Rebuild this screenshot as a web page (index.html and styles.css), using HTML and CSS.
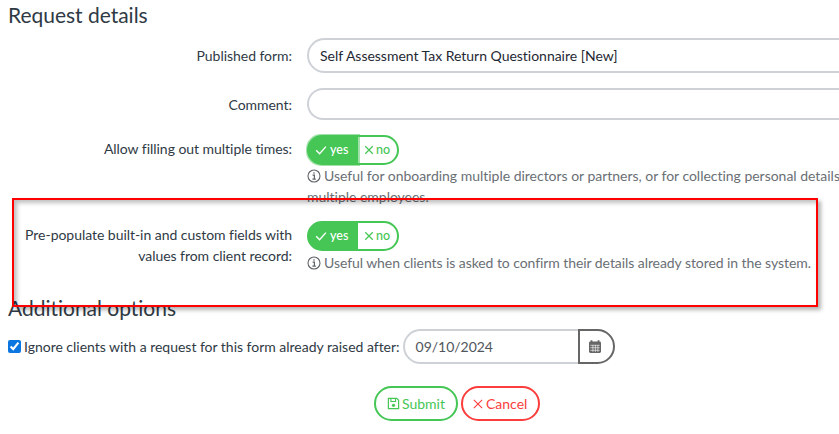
FILE: index.html
```html
<!DOCTYPE html>
<html lang="en">
<head>
<meta charset="utf-8">
<title>Request details</title>
<link rel="stylesheet" href="styles.css">
</head>
<body>
<div class="page">
  <h2 class="heading">Request details</h2>
  <div class="form">
    <div class="row row-form">
      <label class="label">Published form:</label>
      <div class="control"><div class="input input-form">Self Assessment Tax Return Questionnaire [New]</div></div>
    </div>
    <div class="row row-comment">
      <label class="label">Comment:</label>
      <div class="control"><div class="input input-comment"></div></div>
    </div>
    <div class="row row-multi">
      <label class="label label-toggle">Allow filling out multiple times:</label>
      <div class="control">
        <div class="toggle">
          <span class="yes yes-focus"><svg class="ico" viewBox="0 0 12 12"><path d="M1.2 6.3 4.6 9.7 10.9 2.6" fill="none" stroke="currentColor" stroke-width="1.4"/></svg>yes</span>
          <span class="no"><svg class="ico-x" viewBox="0 0 12 12"><path d="M1.5 1.5 10.5 10.5M10.5 1.5 1.5 10.5" fill="none" stroke="currentColor" stroke-width="1.5"/></svg>no</span>
        </div>
        <p class="help help-wrap"><svg class="info" viewBox="0 0 14 14"><circle cx="7" cy="7" r="6" fill="none" stroke="currentColor" stroke-width="1.1"/><path d="M7 3.2v1.6M5.6 6.2H7.4V10M5.4 10.2H8.8" fill="none" stroke="currentColor" stroke-width="1.2"/></svg>Useful for onboarding multiple directors or partners, or for collecting personal details from multiple employees.</p>
      </div>
    </div>
    <div class="row row-prefill">
      <label class="label label-prefill">Pre-populate built-in and custom fields with values from client record:</label>
      <div class="control">
        <div class="toggle">
          <span class="yes"><svg class="ico" viewBox="0 0 12 12"><path d="M1.2 6.3 4.6 9.7 10.9 2.6" fill="none" stroke="currentColor" stroke-width="1.4"/></svg>yes</span>
          <span class="no"><svg class="ico-x" viewBox="0 0 12 12"><path d="M1.5 1.5 10.5 10.5M10.5 1.5 1.5 10.5" fill="none" stroke="currentColor" stroke-width="1.5"/></svg>no</span>
        </div>
        <p class="help help-single"><svg class="info" viewBox="0 0 14 14"><circle cx="7" cy="7" r="6" fill="none" stroke="currentColor" stroke-width="1.1"/><path d="M7 3.2v1.6M5.6 6.2H7.4V10M5.4 10.2H8.8" fill="none" stroke="currentColor" stroke-width="1.2"/></svg>Useful when clients is asked to confirm their details already stored in the system.</p>
      </div>
    </div>
  </div>
  <h2 class="heading heading-options">Additional options</h2>
  <div class="options">
    <input class="check" type="checkbox" checked>
    <span class="check-label">Ignore clients with a request for this form already raised after:</span>
    <div class="date">
      <div class="date-input">09/10/2024</div>
      <div class="date-btn"><svg class="cal" viewBox="0 0 14 14"><path d="M3.5 .8v2M10.5 .8v2" stroke="#666" stroke-width="1.8"/><rect x="1" y="2" width="12" height="11.4" rx="1.4" fill="#666"/><path d="M2.3 5.8h9.4M2.3 8.2h9.4M2.3 10.8h9.4M4.9 5.4v7M7.4 5.4v7M9.9 5.4v7" stroke="#fff" stroke-width=".6"/></svg></div>
    </div>
  </div>
  <div class="actions">
    <button class="btn btn-submit" type="button"><svg class="save" viewBox="0 0 14 14"><path d="M1.5 1.5h9l2 2v9h-11z" fill="none" stroke="currentColor" stroke-width="1.3"/><path d="M4.2 1.8v3h5v-3" fill="none" stroke="currentColor" stroke-width="1.2"/><circle cx="7" cy="9" r="1.7" fill="currentColor"/></svg>Submit</button>
    <button class="btn btn-cancel" type="button"><svg class="cancel-x" viewBox="0 0 12 12"><path d="M1 1 11 11M11 1 1 11" fill="none" stroke="currentColor" stroke-width="1.3"/></svg>Cancel</button>
  </div>
  <div class="annotation"></div>
</div>
</body>
</html>
```
FILE: styles.css
```css
html, body { margin: 0; padding: 0; background: #fff; }
body { width: 839px; height: 434px; overflow: hidden; font-family: Lato, "Open Sans", sans-serif; font-size: 14px; color: #2f3a45; letter-spacing: -.02px; }
.page { position: relative; width: 839px; height: 434px; overflow: hidden; }
.heading { margin: 0; padding: 2px 0 0 8px; font-size: 21px; font-weight: 400; line-height: 25px; color: #2f3a45; }
.form { padding-top: 11px; }
.row { display: grid; grid-template-columns: 292px 1fr; column-gap: 15px; }
.label { text-align: right; line-height: 21px; color: #2f3a45; letter-spacing: -.04px; }
.row-form { height: 50px; }
.row-form .label { padding-top: 7px; }
.row-comment { height: 47px; }
.row-comment .label { padding-top: 6px; }
.row-multi { height: 86px; }
.label-toggle { padding-top: 3px; }
.row-prefill { height: 74px; }
.label-prefill { padding: 3px 0 0 20px; }
.control { min-width: 0; }
.input { box-sizing: border-box; width: 560px; border: 2px solid #ced2d7; border-right: 0; border-radius: 18px 0 0 18px; padding-left: 11px; color: #1f2933; }
.input-form { height: 35px; line-height: 31px; }
.input-comment { height: 32px; }
.toggle { display: flex; box-sizing: border-box; height: 30px; width: 92px; border: 2px solid #45c655; border-radius: 15px; font-size: 12.5px; line-height: 26px; font-weight: 500; }
.yes { width: 50px; background: #45c655; color: #fff; display: flex; align-items: center; padding-left: 7px; box-sizing: border-box; flex: none; border-radius: 13px 0 0 13px; margin: -1px 0 -1px -1px; }
.yes-focus { box-shadow: 0 0 0 2px rgba(69,198,85,.5); }
.no { flex: 1; color: #45c655; display: flex; align-items: center; padding-left: 6px; border-radius: 0 13px 13px 0; }
.ico { width: 12px; height: 12px; margin-right: 3px; }
.ico-x { width: 10px; height: 10px; margin-right: 2px; }
.help { margin: 0; font-size: 14px; line-height: 21px; color: #6a6f75; letter-spacing: -.07px; }
.help-wrap { width: 575px; letter-spacing: -.02px; }
.help-single { white-space: nowrap; margin-top: 1px; }
.info { width: 14px; height: 14px; margin-right: 3px; vertical-align: -2px; color: #5f6468; }
.heading-options { padding-top: 0; }
.options { display: flex; align-items: center; padding: 9px 0 0 8px; height: 35px; }
.check { width: 13px; height: 13px; margin: 0 3px 0 0; accent-color: #0b76e0; flex: none; }
.check-label { color: #2f3a45; white-space: nowrap; margin-right: 3px; }
.date { display: flex; height: 35px; width: 212px; }
.date-input { box-sizing: border-box; width: 175px; border: 2px solid #ced2d7; border-right: 0; border-radius: 18px 0 0 18px; padding-left: 11px; line-height: 31px; color: #50565c; }
.date-btn { box-sizing: border-box; flex: 1; border: 2px solid #666; border-radius: 0 18px 18px 0; display: flex; align-items: center; justify-content: center; padding-right: 2px; }
.cal { width: 14px; height: 15px; }
.actions { display: flex; gap: 3px; padding: 22px 0 0 374px; }
.btn { box-sizing: border-box; height: 35px; border-radius: 18px; background: #fff; border: 2px solid; font: 14px/1 Lato, "Open Sans", sans-serif; padding: 0 11px; display: inline-flex; align-items: center; white-space: nowrap; }
.btn-submit { border-color: #45c655; color: #45c655; }
.btn-cancel { border-color: #fb3d3d; color: #fb3d3d; padding: 0 11px 0 10px; }
.save { width: 13px; height: 13px; margin-right: 2px; }
.cancel-x { width: 10px; height: 10px; margin-right: 3px; }
.annotation { position: absolute; left: 12px; top: 198px; width: 802px; height: 105px; border: 2px solid #f00; box-shadow: 3px 3px 4px rgba(0,0,0,.3), inset 3px 3px 4px rgba(0,0,0,.25); }
```
